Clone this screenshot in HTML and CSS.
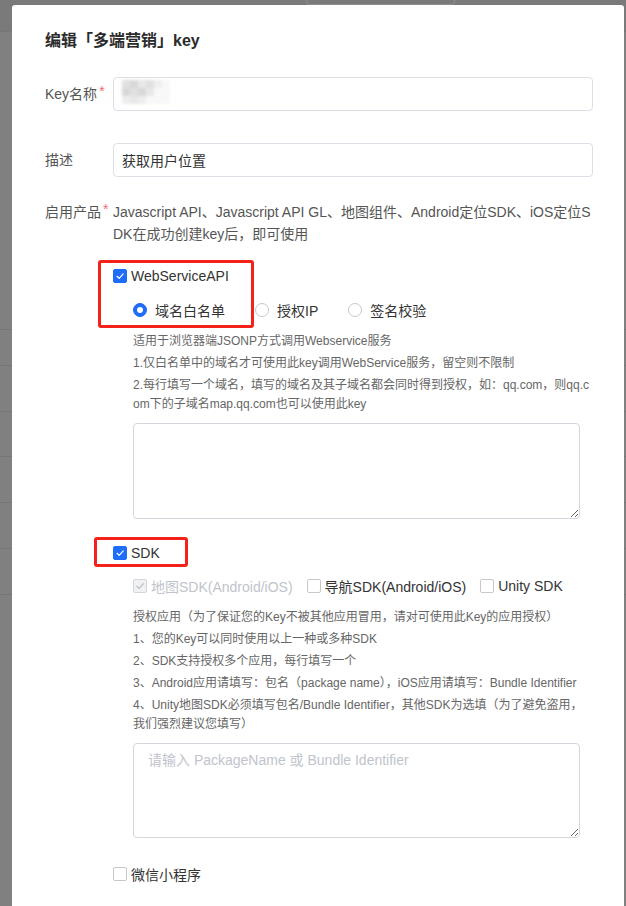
FILE: index.html
```html
<!DOCTYPE html>
<html lang="zh-CN">
<head>
<meta charset="utf-8">
<title>编辑key</title>
<link rel="stylesheet" href="styles.css">
</head>
<body>
<div class="backdrop">
  <div class="bd-top"><div class="bd-btn"></div></div>
  <div class="bd-spacer"></div>
  <div class="bd-row r36"></div>
  <div class="bd-row r46"></div>
  <div class="bd-row r45"></div>
  <div class="bd-row r46"></div>
  <div class="bd-row r46"></div>
  <div class="bd-row r46"></div>
</div>

<div class="modal">
  <h2 class="title">编辑「多端营销」key</h2>

  <div class="form-row row-key">
    <label class="label">Key名称<span class="req">*</span></label>
    <div class="input">
      <span class="mosaic">
        <i class="m1"></i><i class="m2"></i><i class="m3"></i><i class="m1"></i><i class="m4"></i><i class="m5"></i>
        <i class="m2"></i><i class="m1"></i><i class="m2"></i><i class="m3"></i><i class="m5"></i><i class="m5"></i>
        <i class="m4"></i><i class="m3"></i><i class="m4"></i><i class="m5"></i><i class="m5"></i><i class="m5"></i>
      </span>
    </div>
  </div>

  <div class="form-row row-desc">
    <label class="label">描述</label>
    <div class="input">获取用户位置</div>
  </div>

  <div class="form-row row-prod">
    <label class="label">启用产品<span class="req">*</span></label>
    <div class="prod-intro">Javascript API、Javascript API GL、地图组件、Android定位SDK、iOS定位SDK在成功创建key后，即可使用</div>
  </div>

  <div class="products">
    <div class="group ws">
      <div class="annot annot-ws"></div>
      <div class="check-row">
        <span class="cb checked"><svg viewBox="0 0 14 14" width="14" height="14"><path d="M4 7.3 L6.2 9.3 L10.2 4.9" fill="none" stroke="#fff" stroke-width="1.2" stroke-linecap="round" stroke-linejoin="round"/></svg></span>
        <span>WebServiceAPI</span>
      </div>
      <div class="radio-row">
        <span class="radio-item"><span class="rd on"></span><span>域名白名单</span></span>
        <span class="radio-item"><span class="rd"></span><span>授权IP</span></span>
        <span class="radio-item"><span class="rd"></span><span>签名校验</span></span>
      </div>
      <div class="sub">
        <p class="hint">适用于浏览器端JSONP方式调用Webservice服务</p>
        <p class="hint">1.仅白名单中的域名才可使用此key调用WebService服务，留空则不限制</p>
        <p class="hint">2.每行填写一个域名，填写的域名及其子域名都会同时得到授权，如：qq.com，则qq.com下的子域名map.qq.com也可以使用此key</p>
        <textarea class="ta ta1"></textarea>
      </div>
    </div>

    <div class="group sdk">
      <div class="annot annot-sdk"></div>
      <div class="check-row">
        <span class="cb checked"><svg viewBox="0 0 14 14" width="14" height="14"><path d="M4 7.3 L6.2 9.3 L10.2 4.9" fill="none" stroke="#fff" stroke-width="1.2" stroke-linecap="round" stroke-linejoin="round"/></svg></span>
        <span>SDK</span>
      </div>
      <div class="sdk-row">
        <span class="sdk-item disabled"><span class="cb dis"><svg viewBox="0 0 14 14" width="14" height="14"><path d="M3.8 7.3 L6.1 9.4 L10.3 4.8" fill="none" stroke="#bfc2c8" stroke-width="1.3" stroke-linecap="round" stroke-linejoin="round"/></svg></span><span>地图SDK(Android/iOS)</span></span>
        <span class="sdk-item"><span class="cb"></span><span>导航SDK(Android/iOS)</span></span>
        <span class="sdk-item"><span class="cb"></span><span>Unity SDK</span></span>
      </div>
      <div class="sub sub-sdk">
        <p class="hint">授权应用（为了保证您的Key不被其他应用冒用，请对可使用此Key的应用授权）</p>
        <p class="hint">1、您的Key可以同时使用以上一种或多种SDK</p>
        <p class="hint">2、SDK支持授权多个应用，每行填写一个</p>
        <p class="hint">3、Android应用请填写：包名（package name），iOS应用请填写：Bundle Identifier</p>
        <p class="hint">4、Unity地图SDK必须填写包名/Bundle Identifier，其他SDK为选填（为了避免盗用，我们强烈建议您填写）</p>
        <textarea class="ta ta2" placeholder="请输入 PackageName 或 Bundle Identifier"></textarea>
      </div>
    </div>

    <div class="group wx">
      <div class="check-row">
        <span class="cb"></span>
        <span>微信小程序</span>
      </div>
    </div>
  </div>
</div>
</body>
</html>
```

FILE: styles.css
```css
html, body {
  margin: 0;
  padding: 0;
}

body {
  width: 626px;
  height: 906px;
  overflow: hidden;
  background: #808080;
  font-family: "Liberation Sans", "Noto Sans CJK SC", sans-serif;
  position: relative;
}

/* dimmed page behind the dialog */
.backdrop {
  height: 906px;
}

.bd-top {
  height: 32px;
  background: #7a7a7a;
  border-bottom: 1px solid #767676;
  box-sizing: border-box;
  padding-left: 306px;
  display: flex;
}

.bd-btn {
  width: 149px;
  height: 5px;
  box-sizing: border-box;
  border: 1px solid #8e8e8e;
  border-top: none;
  border-radius: 0 0 4px 4px;
}

.bd-spacer {
  height: 297px;
  border-bottom: 1px solid #767676;
}

.bd-row {
  border-bottom: 1px solid #767676;
  box-sizing: border-box;
}

.r36 { height: 36px; }
.r45 { height: 45px; }
.r46 { height: 46px; }

/* dialog */
.modal {
  position: absolute;
  left: 12px;
  top: 5px;
  width: 612px;
  height: 901px;
  box-sizing: border-box;
  background: #fff;
  border-radius: 3px 3px 0 0;
  padding: 24px 31px 0 33px;
}

.title {
  margin: 0;
  font-size: 16px;
  line-height: 24px;
  font-weight: bold;
  color: #2b2b2b;
}

.form-row {
  display: flex;
  align-items: center;
  margin-top: 24px;
}

.row-desc {
  margin-top: 32px;
}

.row-prod {
  align-items: flex-start;
  margin-top: 24px;
}

.label {
  width: 68px;
  flex: none;
  font-size: 14px;
  line-height: 22px;
  color: #555;
}

.req {
  color: #f56c6c;
  margin-left: 2px;
  position: relative;
  top: -3px;
}

.input {
  width: 480px;
  height: 34px;
  box-sizing: border-box;
  border: 1px solid #dcdfe6;
  border-radius: 4px;
  padding: 0 8px;
  font-size: 14px;
  color: #333;
  display: flex;
  align-items: center;
}

.mosaic {
  display: grid;
  grid-template-columns: repeat(6, 8px);
  grid-auto-rows: 8px;
  margin-top: -5px;
  filter: blur(1.5px);
}

.mosaic i { display: block; }
.m1 { background: #e0e0e0; }
.m2 { background: #d8d8d8; }
.m3 { background: #e8e8e8; }
.m4 { background: #eeeeee; }
.m5 { background: #f8f8f8; }

.prod-intro {
  width: 480px;
  font-size: 14px;
  line-height: 22px;
  color: #555;
  word-break: break-all;
}

.products {
  margin-left: 68px;
}

.group {
  position: relative;
}

.ws { margin-top: 21px; }
.sdk { margin-top: 24px; }
.wx { margin-top: 26px; }

.check-row {
  display: flex;
  align-items: center;
  gap: 4px;
  height: 20px;
  font-size: 14px;
  color: #333;
}

.cb {
  width: 14px;
  height: 14px;
  flex: none;
  box-sizing: border-box;
  border: 1px solid #c6c8cc;
  border-radius: 2px;
  background: #fff;
  display: flex;
  align-items: center;
  justify-content: center;
  overflow: hidden;
}

.cb svg { flex: none; }

.cb.checked {
  background: #1e6cfa;
  border-color: #1e6cfa;
}

.cb.dis {
  background: #f0f1f3;
  border-color: #d4d6da;
}

.radio-row {
  display: flex;
  align-items: center;
  gap: 30px;
  height: 20px;
  margin-top: 14px;
  margin-left: 20px;
  font-size: 14px;
  color: #333;
}

.radio-item {
  display: flex;
  align-items: center;
  gap: 8px;
}

.rd {
  width: 14px;
  height: 14px;
  box-sizing: border-box;
  border: 1px solid #c6c8cc;
  border-radius: 50%;
  background: #fff;
  display: flex;
  align-items: center;
  justify-content: center;
}

.rd.on {
  background: #1e6cfa;
  border-color: #1e6cfa;
}

.rd.on::after {
  content: "";
  width: 6px;
  height: 6px;
  border-radius: 50%;
  background: #fff;
}

.sub {
  margin-left: 20px;
  margin-top: 12px;
}

.hint {
  margin: 0 0 3px;
  width: 462px;
  font-size: 12px;
  line-height: 19px;
  color: #666;
  word-break: break-all;
}

.sub-sdk .hint {
  width: 455px;
}

.ta {
  display: block;
  width: 447px;
  box-sizing: border-box;
  margin: 9px 0 0;
  border: 1px solid #d3d6dc;
  border-radius: 4px;
  padding: 6px 14px;
  font-family: "Liberation Sans", "Noto Sans CJK SC", sans-serif;
  font-size: 14px;
  line-height: 20px;
  color: #333;
  resize: vertical;
  outline: none;
  background: #fff;
}

.ta1 { height: 96px; }
.ta2 { height: 95px; }

.ta::placeholder {
  color: #c0c4cc;
}

.sdk-row {
  display: flex;
  align-items: center;
  gap: 14px;
  height: 20px;
  margin-top: 13px;
  margin-left: 20px;
  font-size: 14px;
  color: #333;
}

.sdk-item {
  display: flex;
  align-items: center;
  gap: 4px;
}

.sdk-item.disabled {
  color: #c0c4cc;
}

/* red annotation frames drawn over the form */
.annot {
  position: absolute;
  box-sizing: border-box;
  border: 3px solid #f5221b;
  border-radius: 3px;
  pointer-events: none;
}

.annot-ws {
  left: -15px;
  top: -6px;
  width: 156px;
  height: 68px;
}

.annot-sdk {
  left: -19px;
  top: -6px;
  width: 94px;
  height: 30px;
}
```
